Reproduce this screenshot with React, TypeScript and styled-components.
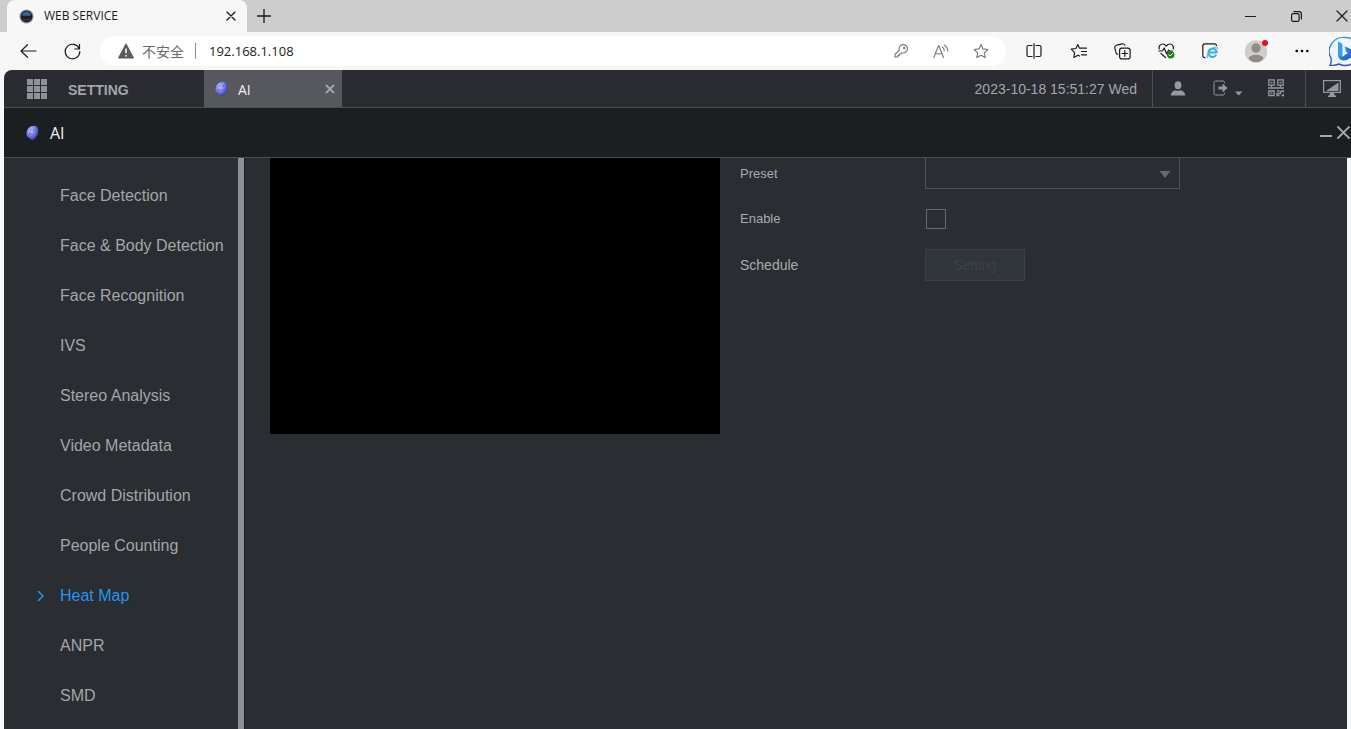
import React from "react";
import styled, { createGlobalStyle } from "styled-components";

const arial = `"Liberation Sans", Arial, sans-serif`;
const ui = `"Open Sans", "Noto Sans CJK SC", sans-serif`;

const Global = createGlobalStyle`
  *, *::before, *::after { box-sizing: border-box; }
  body { margin: 0; background: #f7f8fc; font-family: ${arial}; overflow-x: hidden; }
  button, select, input { font: inherit; margin: 0; }
`;

const Page = styled.div`
  min-height: 100vh;
  display: flex;
  flex-direction: column;
  overflow: hidden;
`;

const PlainButton = styled.button<{ $w: number; $h?: number }>`
  flex: none;
  display: flex;
  align-items: center;
  justify-content: center;
  width: ${(p) => p.$w}px;
  height: ${(p) => p.$h ?? 32}px;
  padding: 0;
  border: 0;
  background: none;
  color: inherit;
  svg { display: block; flex: none; }
`;

/* Browser chrome */
const TabStrip = styled.div`
  display: flex;
  height: 32px;
  padding-left: 7px;
  background: #cdcdcd;
  color: #1b1b1b;
`;
const BrowserTab = styled.div`
  display: flex;
  align-items: center;
  width: 240px;
  padding: 0 0 0 12px;
  border-radius: 8px 8px 0 0;
  background: #f7f7f7;
  font: 12px/16px ${ui};
`;
const TabTitle = styled.span`
  flex: 1;
  padding-left: 10px;
`;
const WindowButtons = styled.div`
  display: flex;
  width: 124px;
  margin-left: auto;
`;
const Toolbar = styled.div`
  display: flex;
  align-items: center;
  height: 38px;
  padding-left: 6px;
  background: #f7f7f7;
  color: #1b1b1b;
`;
const AddressBar = styled.div`
  flex: 1;
  min-width: 0;
  display: flex;
  align-items: center;
  height: 30px;
  margin: 0 6px;
  padding: 0 5px 0 18px;
  border-radius: 15px;
  background: #fff;
  color: #777;
`;
const Insecure = styled.span`
  padding: 0 11px 0 8px;
  border-right: 1px solid #8a8a8a;
  font: 14px/16px "Noto Sans CJK SC", sans-serif;
  color: #6a6a6a;
`;
const AddressInput = styled.input`
  flex: 1;
  min-width: 0;
  padding: 0 13px;
  border: 0;
  outline: 0;
  background: none;
  && { font: 13px/20px ${ui}; }
  color: #1b1b1b;
`;
const BingButton = styled(PlainButton)`
  justify-content: flex-start;
  padding-left: 5px;
  overflow: hidden;
`;

/* Device web application */
const Shell = styled.div`
  flex: 1;
  display: flex;
  flex-direction: column;
  margin-left: 4px;
  border-radius: 8px 0 0 0;
  overflow: hidden;
`;
const MenuBar = styled.header`
  display: flex;
  height: 38px;
  border-bottom: 1px solid #4b4f53;
  background: #2a2c31;
  color: #96999d;
`;
const SettingButton = styled.button`
  display: flex;
  align-items: center;
  gap: 21px;
  width: 200px;
  padding: 0 0 0 23px;
  border: 0;
  background: none;
  color: #a3a6aa;
  && { font: bold 14px/16px ${arial}; }
  span { padding-top: 2px; }
`;
const AppTab = styled.div`
  display: flex;
  align-items: center;
  width: 138px;
  padding-left: 10px;
  background: #56585d;
  color: #f2f2f2;
  font: 14px/16px ${ui};
  span { flex: 1; padding: 2px 0 0 9px; }
`;
const Clock = styled.time`
  margin-left: auto;
  padding: 3px 15px 0 0;
  font: 14px/32px ${arial};
  color: #a3a6aa;
`;
const Tools = styled.div<{ $start: number; $end: number }>`
  display: flex;
  align-items: center;
  padding: 0 ${(p) => p.$end}px 0 ${(p) => p.$start}px;
  border-left: 1px solid #4b4f53;
`;
const TitleBar = styled.div`
  display: flex;
  align-items: center;
  height: 50px;
  padding-left: 21px;
  border-bottom: 1px solid #4b4f53;
  background: #1b1f21;
  color: #a3a6aa;
`;
const Title = styled.h1`
  flex: 1;
  margin: 0;
  padding-left: 10px;
  font: 16px/20px ${ui};
  color: #f2f2f2;
`;
const Body = styled.div`
  flex: 1;
  display: flex;
  margin-right: 4px;
  background: #2a2d31;
`;
const Sidebar = styled.nav`
  flex: none;
  width: 234px;
  padding-top: 13px;
`;
const MenuLink = styled.a<{ $active?: boolean }>`
  display: flex;
  align-items: center;
  height: 50px;
  padding-left: ${(p) => (p.$active ? 32 : 56)}px;
  font-size: 16px;
  line-height: 20px;
  white-space: nowrap;
  text-decoration: none;
  color: ${(p) => (p.$active ? "#2196ee" : "#a3a6aa")};
  svg { margin-right: 14px; }
`;
const Splitter = styled.div`
  flex: none;
  width: 7px;
  border-right: 1px solid #1d2023;
  background: #8d9094;
`;
const Content = styled.main`
  flex: 1;
  display: flex;
  gap: 20px;
  padding: 0 24px 0 25px;
`;
const Video = styled.div`
  flex: none;
  width: 450px;
  height: 276px;
  background: #000;
`;
const Form = styled.form`
  flex: 1;
  display: flex;
  flex-direction: column;
  gap: 14px;
`;
const Field = styled.div`
  display: flex;
  align-items: center;
  height: 32px;
  &:first-child { height: 31px; }
`;
const Label = styled.label<{ $size: number }>`
  flex: none;
  width: 185px;
  font-size: ${(p) => p.$size}px;
  line-height: 18px;
  color: #a9abaf;
`;
const SelectBox = styled.div`
  position: relative;
  width: 255px;
  height: 100%;
  svg { position: absolute; right: 9px; top: 13px; pointer-events: none; }
`;
const Select = styled.select`
  appearance: none;
  display: block;
  width: 100%;
  height: 100%;
  padding: 0 10px;
  border: 1px solid #4e5155;
  border-top: 0;
  border-radius: 0;
  background: #2a2d31;
  color: #a9abaf;
  opacity: 1;
`;
const Check = styled.input`
  appearance: none;
  width: 20px;
  height: 20px;
  && { margin-left: 1px; }
  border: 1px solid #66696d;
  background: #2a2d31;
`;
const SettingAction = styled.button`
  width: 100px;
  height: 32px;
  padding: 0;
  border: 1px solid #3d4044;
  background: #30343b;
  && { font-size: 14px; }
  color: #3d4146;
`;

const Svg = ({ w, h, children }: { w: number; h: number; children: React.ReactNode }) => (
  <svg width={w} height={h} viewBox={`0 0 ${w} ${h}`} fill="none" stroke="currentColor" strokeWidth="1.2" strokeLinecap="round" strokeLinejoin="round" aria-hidden="true">
    {children}
  </svg>
);

const Cross = ({ size, width = 1.2 }: { size: number; width?: number }) => (
  <Svg w={size} h={size}>
    <path d={`M1 1L${size - 1} ${size - 1}M${size - 1} 1L1 ${size - 1}`} strokeWidth={width} />
  </Svg>
);

const Brain = ({ id }: { id: string }) => (
  <svg width="15" height="16" viewBox="0 0 15 16" aria-hidden="true">
    <defs>
      <radialGradient id={id} cx="38%" cy="32%" r="70%">
        <stop offset="0" stopColor="#bcc4ff" />
        <stop offset="0.5" stopColor="#7d82ec" />
        <stop offset="1" stopColor="#2f35a0" />
      </radialGradient>
    </defs>
    <path d="M6 1.200C8.500.2 11.500.5 12.700 2.600c1.200 2.200.8 5.600-.7 8.200-1 1.800-2.400 3.700-4.200 4.400-1 .3-1.300-.8-2.300-1.300C3 12.700 1.600 11.500 1.500 9 1.400 5.800 3.200 2.300 6 1.200Z" fill={`url(#${id})`} />
    <path d="M5 5.500l1.500-1M8.500 6l1.500-2M4 9.500l2-1M8 10l1.500-1.500M10.500 7.500l1-.5" fill="none" stroke="#4a50c8" strokeWidth=".8" />
  </svg>
);

const starPath = "M8 1.500l2 4.400 4.800.6-3.500 3.300.9 4.700L8 12.200l-4.200 2.300.9-4.700L1.200 6.500 6 5.900Z";

const menu = ["Face Detection", "Face & Body Detection", "Face Recognition", "IVS", "Stereo Analysis", "Video Metadata", "Crowd Distribution", "People Counting", "Heat Map", "ANPR", "SMD"];

function BrowserChrome() {
  return (
    <>
      <TabStrip>
        <BrowserTab>
          <svg width="15" height="15" viewBox="0 0 15 15" aria-hidden="true">
            <circle cx="7.500" cy="7.500" r="7" fill="#8d868b" />
            <circle cx="7.500" cy="7.500" r="5.800" fill="#1c1f2b" />
            <path d="M3 6.800a4.500 4 0 0 1 9 0Z" fill="#35669c" />
            <path d="M4 10q3.500 1.800 7 0" stroke="#3c445c" fill="none" />
          </svg>
          <TabTitle>WEB SERVICE</TabTitle>
          <PlainButton $w={32} aria-label="Close tab"><Cross size={10} width={1.3} /></PlainButton>
        </BrowserTab>
        <PlainButton $w={34} aria-label="New tab">
          <Svg w={14} h={14}><path d="M7 .5v13M.5 7h13" strokeWidth="1.300" /></Svg>
        </PlainButton>
        <WindowButtons>
          <PlainButton $w={46} aria-label="Minimize"><Svg w={11} h={11}><path d="M.5 5.500h10" /></Svg></PlainButton>
          <PlainButton $w={46} aria-label="Restore">
            <Svg w={11} h={11}><rect x=".6" y="2.600" width="7.500" height="7.800" rx="1.500" /><path d="M2.800.6h5.200a2.400 2.400 0 0 1 2.400 2.400v5" /></Svg>
          </PlainButton>
          <PlainButton $w={46} aria-label="Close"><Cross size={12} /></PlainButton>
        </WindowButtons>
      </TabStrip>
      <Toolbar>
        <PlainButton $w={44} aria-label="Back"><Svg w={17} h={14}><path d="M16 7H1M7.500.700L1 7l6.500 6.300" /></Svg></PlainButton>
        <PlainButton $w={44} aria-label="Refresh">
          <Svg w={17} h={17}><path d="M15.300 5.900A7.300 7.300 0 1 0 15.800 8.500M15.500 1.300v4.700h-4.700" /></Svg>
        </PlainButton>
        <AddressBar>
          <svg width="16" height="16" viewBox="0 0 16 16" aria-hidden="true">
            <path d="M8 .8L15.500 15H.5Z" fill="#5b5b5b" stroke="#5b5b5b" strokeLinejoin="round" />
            <path d="M8 5.500v4.800M8 12v1.500" stroke="#fff" strokeWidth="1.500" />
          </svg>
          <Insecure>不安全</Insecure>
          <AddressInput aria-label="Address" defaultValue="192.168.1.108" />
          <PlainButton $w={40} aria-label="Password">
            <Svg w={14} h={14}>
              <path d="M5.300 6.200a4.200 4.200 0 1 1 2.700 2.600L6.600 10.200H5.200v1.400H3.800V13H1v-2.500Z" strokeWidth="1.100" />
              <circle cx="10.200" cy="3.900" r=".6" />
            </Svg>
          </PlainButton>
          <PlainButton $w={40} aria-label="Read aloud">
            <Svg w={16} h={15}>
              <path d="M.8 13.500L5.500 1.800h.4l4.700 11.700M2.400 9.700H9M9.500 3.200q1.800 1.200 1.800 3.600M11.200 1q3.500 2.200 3.500 6" strokeWidth="1.100" />
            </Svg>
          </PlainButton>
          <PlainButton $w={40} aria-label="Add to favourites"><Svg w={16} h={16}><path d={starPath} strokeWidth="1.100" /></Svg></PlainButton>
        </AddressBar>
        <PlainButton $w={44} aria-label="Split screen">
          <Svg w={16} h={16}><path d="M8 .7v14.600M6 2.500H2.500A1.500 1.500 0 0 0 1 4v8a1.500 1.500 0 0 0 1.500 1.500H6M10 2.500h3.500A1.500 1.500 0 0 1 15 4v8a1.500 1.500 0 0 1-1.500 1.500H10" /></Svg>
        </PlainButton>
        <PlainButton $w={44} aria-label="Favourites">
          <Svg w={17} h={16}><path d="M9.500 5.200H16.500M11.500 8.500h5M11.500 11.800h5M9.500 5.200L7.800 1.500 5.900 5.500l-4.700.7 3.400 3.400-.8 4.900 4.200-2.300 1.500.8" /></Svg>
        </PlainButton>
        <PlainButton $w={44} aria-label="Collections">
          <Svg w={17} h={17}><path d="M3.600 11.500A3 3 0 0 1 2 9.700L.9 5.200A2.500 2.500 0 0 1 2.600 2.200L8.200.8a2.500 2.500 0 0 1 2.700 1.400" /><rect x="5.600" y="5.100" width="10.500" height="10.800" rx="2.200" /><path d="M10.800 7.700v5.600M8 10.500h5.600" /></Svg>
        </PlainButton>
        <PlainButton $w={44} aria-label="Browser essentials">
          <Svg w={17} h={16}>
            <path d="M1.200 6C.4 3 2.500 1 4.700 1c1.600 0 2.800 1 3.500 2.200C9 2 10.200 1 11.800 1c2.200 0 4.200 2 3.400 5M.8 8h3.700l1.700-3 2.500 6 1.900-4 .8 1h3M3 10.500l4.500 4" />
            <circle cx="12.700" cy="11.700" r="3.700" fill="#168018" stroke="none" />
            <path d="M11 11.800l1.200 1.200 2.200-2.300" stroke="#fff" strokeWidth="1" />
          </Svg>
        </PlainButton>
        <PlainButton $w={44} aria-label="Internet Explorer mode">
          <Svg w={17} h={16}>
            <path d="M14.500 2.500A2 2 0 0 0 12.500.8H3A2.200 2.200 0 0 0 .8 3v9.500A2.200 2.200 0 0 0 3 14.700" />
            <path d="M14.200 11.800A4.200 4.200 0 1 1 14.700 9.500H7.500" stroke="#32aee8" strokeWidth="2" strokeLinecap="butt" />
            <path d="M5.200 14.800C3.500 13 8.500 4.500 14.500 3.800q1.700.2.700 2.200" stroke="#32aee8" strokeWidth="1" />
          </Svg>
        </PlainButton>
        <PlainButton $w={48} aria-label="Profile">
          <svg width="24" height="24" viewBox="0 0 24 24" aria-hidden="true">
            <circle cx="12" cy="12.500" r="11.200" fill="#cfcdcc" />
            <circle cx="12" cy="9" r="4.700" fill="#8f8b89" />
            <path d="M4.500 19.500Q6 15.800 12 15.800t7.500 3.700Q16.500 23.300 12 23.300T4.500 19.500Z" fill="#8f8b89" />
            <circle cx="21" cy="4" r="3" fill="#df1022" />
          </svg>
        </PlainButton>
        <PlainButton $w={44} aria-label="More">
          <svg width="14" height="4" viewBox="0 0 14 4" aria-hidden="true"><circle cx="1.700" cy="2" r="1.300" /><circle cx="7" cy="2" r="1.300" /><circle cx="12.300" cy="2" r="1.300" /></svg>
        </PlainButton>
        <BingButton $w={27} aria-label="Bing">
          <svg width="32" height="31" viewBox="0 0 32 31" aria-hidden="true">
            <defs>
              <linearGradient id="bubble" x1="0" y1="0" x2="0" y2="1"><stop offset="0" stopColor="#3d9ae0" /><stop offset="1" stopColor="#3150b8" /></linearGradient>
              <linearGradient id="bing" x1="0" y1="0" x2="1" y2="1"><stop offset="0" stopColor="#3aa5ee" /><stop offset="1" stopColor="#1b50c8" /></linearGradient>
            </defs>
            <path d="M16 1.500a14 14 0 1 1-6 26.500q-4 1.800-9 1.200 1.800-2.500 1-7A14 14 0 0 1 16 1.500Z" fill="#eff6fd" stroke="url(#bubble)" strokeWidth="1.400" />
            <path d="M9 5.500l3 1.400q1.500.8 1.500 2.500V20l-1.500 2.500Q9 21.500 9 18.500Z" fill="#3a9cec" />
            <path d="M15.500 10.500q7 2 8.500 5 .8 4-3 6.500-3.500 2.700-6.500 2.500-5-.5-5.500-5.500 2 2.500 4.500 1.500l5.500-3.500-2-1.500Z" fill="url(#bing)" />
          </svg>
        </BingButton>
      </Toolbar>
    </>
  );
}

export default function App() {
  return (
    <Page>
      <Global />
      <BrowserChrome />
      <Shell>
        <MenuBar>
          <SettingButton>
            <svg width="20" height="20" viewBox="0 0 20 20" fill="#8f9296" aria-hidden="true">
              {[0, 7, 14].map((y) => [0, 7, 14].map((x) => <rect key={`${x}-${y}`} x={x} y={y} width="6" height="6" />))}
            </svg>
            <span>SETTING</span>
          </SettingButton>
          <AppTab>
            <Brain id="brainTab" />
            <span>AI</span>
            <PlainButton $w={25} aria-label="Close AI">
              <svg width="10" height="10" viewBox="0 0 10 10" stroke="#a3a6aa" strokeWidth="1.800" aria-hidden="true"><path d="M1 1l8 8M9 1L1 9" /></svg>
            </PlainButton>
          </AppTab>
          <Clock>2023-10-18 15:51:27 Wed</Clock>
          <Tools $start={2} $end={8}>
            <PlainButton $w={46} aria-label="User">
              <svg width="16" height="15" viewBox="0 0 16 15" fill="currentColor" aria-hidden="true"><ellipse cx="8" cy="4.200" rx="3.400" ry="4" /><path d="M.7 14.500Q1 10.500 5.300 9.200q2.700 1.300 5.400 0 4.300 1.300 4.600 5.300Z" /></svg>
            </PlainButton>
            <PlainButton $w={54} aria-label="Log out">
              <svg width="30" height="18" viewBox="0 0 30 18" fill="none" stroke="currentColor" aria-hidden="true">
                <path d="M11.500 3.500v-1A1.500 1.500 0 0 0 10 1H2.500A1.500 1.500 0 0 0 1 2.500v11A1.500 1.500 0 0 0 2.500 15H10a1.500 1.500 0 0 0 1.500-1.500v-1" />
                <path d="M5.500 6.500h4V3.500l5 4.500-5 4.500v-3h-4Z" fill="currentColor" stroke="none" />
                <path d="M22 11.500h7.500L25.700 15.500Z" fill="currentColor" stroke="none" />
              </svg>
            </PlainButton>
            <PlainButton $w={42} aria-label="QR codes">
              <svg width="16" height="22" viewBox="0 0 16 22" fill="none" stroke="currentColor" strokeWidth="1.300" aria-hidden="true">
                <path d="M.8 1.800h5.400v5.400H.8ZM9.800 1.800h5.400v5.400H9.800ZM.8 13h5.400v4.500H.8ZM0 10h16M9 13h2.500M13 13h2.200v1.500M12.500 13v2.500H9v2h2.500M13.500 17.500h2V16" />
                <path d="M2.500 4.500h2M11.500 4.500h2M2.500 15.200h2M3.500 7v2M12.500 7v2" />
              </svg>
            </PlainButton>
          </Tools>
          <Tools $start={6} $end={0}>
            <PlainButton $w={39} aria-label="Monitor">
              <svg width="18" height="19" viewBox="0 0 18 19" aria-hidden="true">
                <rect x=".6" y="1.600" width="16.800" height="11.800" fill="none" stroke="currentColor" strokeWidth="1.200" />
                <path d="M15.500 3.500V12H3ZM7 14h4l.7 2.500h1.300V18H5v-1.500h1.300Z" fill="currentColor" />
              </svg>
            </PlainButton>
          </Tools>
        </MenuBar>
        <TitleBar>
          <Brain id="brainTitle" />
          <Title>AI</Title>
          <PlainButton $w={20} aria-label="Minimize panel">
            <svg width="12" height="14" viewBox="0 0 12 14" aria-hidden="true"><path d="M0 10h12" stroke="currentColor" strokeWidth="2" /></svg>
          </PlainButton>
          <PlainButton $w={15} aria-label="Close panel"><Cross size={13} width={1.800} /></PlainButton>
        </TitleBar>
        <Body>
          <Sidebar>
            {menu.map((name) => {
              const active = name === "Heat Map";
              return (
                <MenuLink key={name} href="#" $active={active} aria-current={active ? "page" : undefined}>
                  {active && <Svg w={10} h={12}><path d="M2.500 1.500L7 6l-4.500 4.500" strokeWidth="1.500" /></Svg>}
                  {name}
                </MenuLink>
              );
            })}
          </Sidebar>
          <Splitter />
          <Content>
            <Video />
            <Form>
              <Field>
                <Label $size={13} htmlFor="preset">Preset</Label>
                <SelectBox>
                  <Select id="preset" disabled><option value="" /></Select>
                  <svg width="12" height="8" viewBox="0 0 12 8" aria-hidden="true"><path d="M.5 0h11L6 7Z" fill="#66696d" /></svg>
                </SelectBox>
              </Field>
              <Field>
                <Label $size={13} htmlFor="enable">Enable</Label>
                <Check id="enable" type="checkbox" />
              </Field>
              <Field>
                <Label $size={14} htmlFor="schedule">Schedule</Label>
                <SettingAction id="schedule" type="button" disabled>Setting</SettingAction>
              </Field>
            </Form>
          </Content>
        </Body>
      </Shell>
    </Page>
  );
}
